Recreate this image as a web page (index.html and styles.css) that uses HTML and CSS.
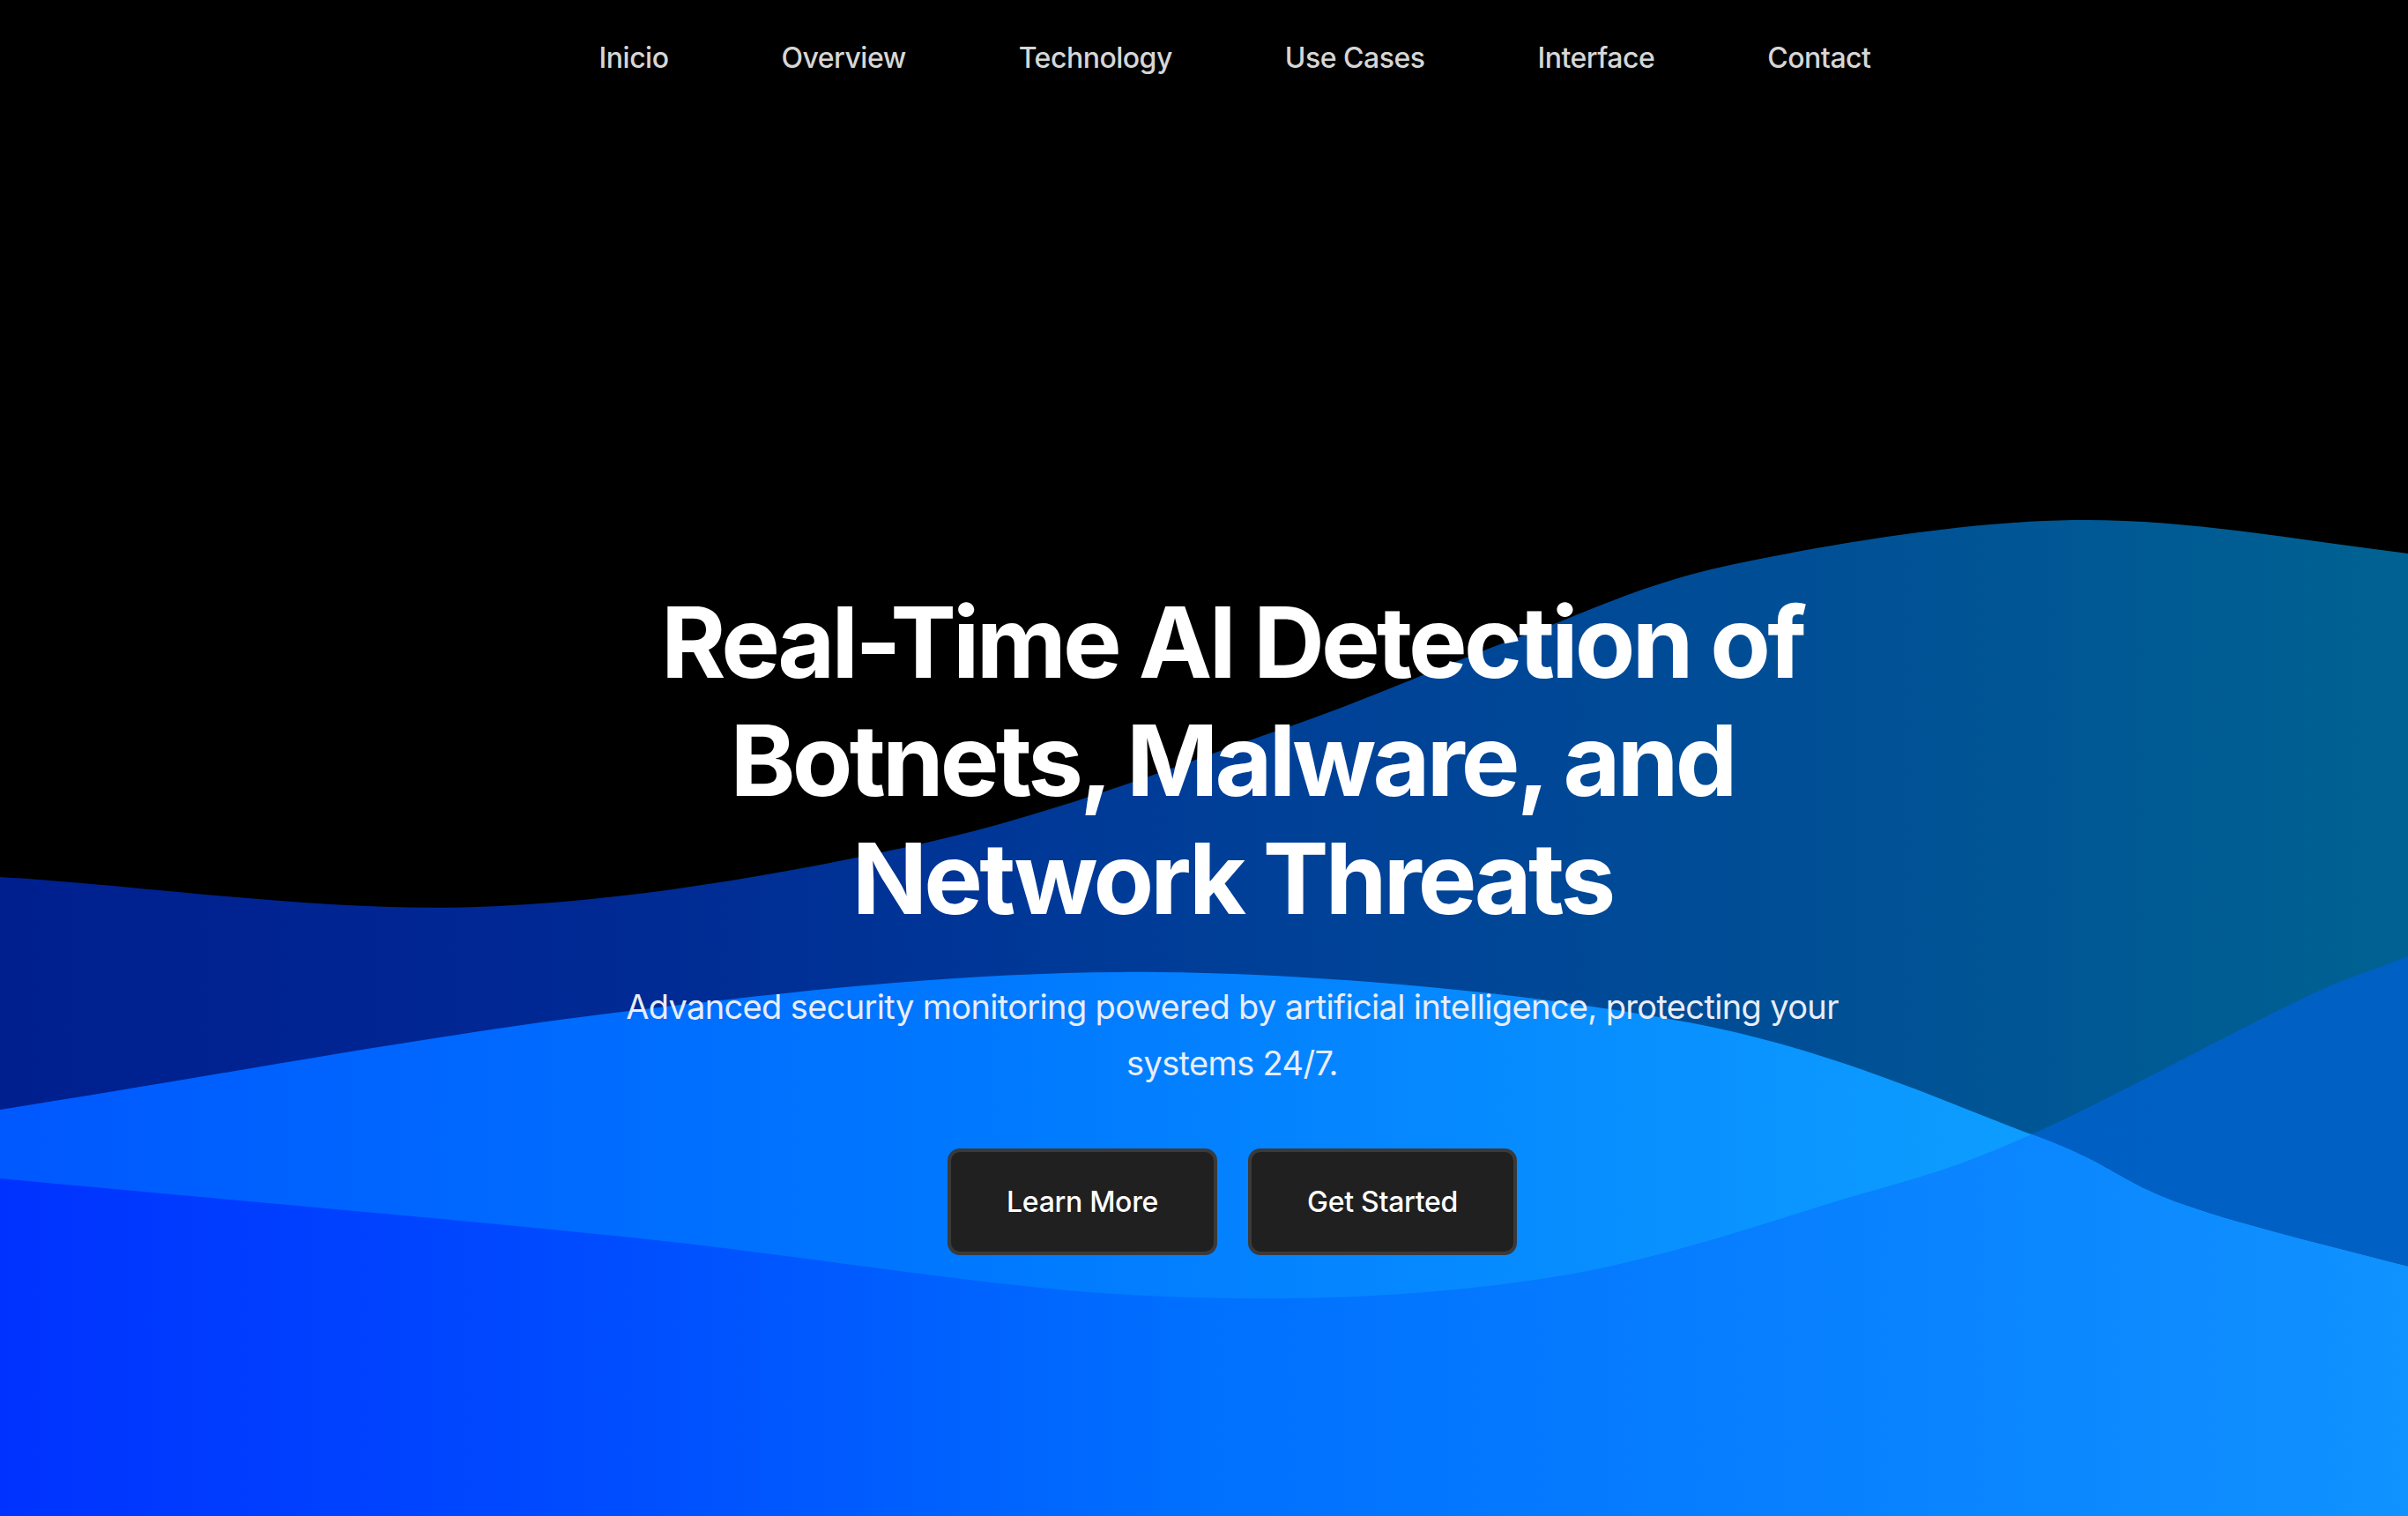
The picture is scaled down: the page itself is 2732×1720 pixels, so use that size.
FILE: index.html
```html
<!DOCTYPE html>
<html lang="en">
<head>
<meta charset="utf-8">
<title>AI Threat Detection</title>
<link rel="stylesheet" href="styles.css">
</head>
<body>
<div class="page">
  <svg class="waves" viewBox="0 0 2732 1720" preserveAspectRatio="none" aria-hidden="true">
    <defs>
      <linearGradient id="gBack" x1="0" y1="0" x2="1" y2="0">
        <stop offset="0" stop-color="#001f8f"/>
        <stop offset="0.25" stop-color="#002994"/>
        <stop offset="0.5" stop-color="#003e98"/>
        <stop offset="0.75" stop-color="#004f96"/>
        <stop offset="1" stop-color="#006292"/>
      </linearGradient>
      <linearGradient id="gFront" x1="0" y1="0" x2="1" y2="0">
        <stop offset="0" stop-color="#005ac0"/>
        <stop offset="1" stop-color="#0060c4"/>
      </linearGradient>
      <linearGradient id="gMid" x1="0" y1="0" x2="1" y2="0">
        <stop offset="0" stop-color="#0058ff"/>
        <stop offset="0.4" stop-color="#0078ff"/>
        <stop offset="0.8" stop-color="#0c9aff"/>
        <stop offset="1" stop-color="#10a4ff"/>
      </linearGradient>
      <linearGradient id="gBottom" x1="0" y1="0" x2="1" y2="0">
        <stop offset="0" stop-color="#0032ff"/>
        <stop offset="0.25" stop-color="#004cff"/>
        <stop offset="0.5" stop-color="#0070ff"/>
        <stop offset="0.75" stop-color="#0880ff"/>
        <stop offset="1" stop-color="#1092ff"/>
      </linearGradient>
      <clipPath id="clipMid">
        <path d="M0,1259 C236,1222 495,1173 714,1147 C933,1121 1115,1101 1315,1103 C1515,1105 1751,1129 1916,1160 C2081,1191 2212,1253 2305,1287 C2398,1321 2404,1341 2475,1366 C2546,1391 2646,1415 2732,1437 L2732,1720 L0,1720 Z"/>
      </clipPath>
    </defs>
    <rect x="0" y="0" width="2732" height="1720" fill="#000"/>
    <path fill="url(#gBack)" d="M0,995 C157,1004 366,1035 540,1029 C714,1023 894,991 1047,957 C1200,923 1342,866 1455,827 C1568,788 1638,754 1723,723 C1809,692 1863,662 1968,640 C2073,618 2225,592 2352,590 C2479,588 2607,613 2732,628 L2732,1720 L0,1720 Z"/>
    <path fill="url(#gFront)" d="M0,1337 C232,1359 480,1380 697,1402 C914,1424 1126,1462 1300,1470 C1474,1478 1609,1471 1742,1452 C1875,1433 2006,1386 2100,1358 C2194,1331 2221,1324 2305,1287 C2389,1250 2533,1171 2604,1137 C2675,1103 2683,1105 2732,1085 L2732,1720 L0,1720 Z"/>
    <path fill="url(#gMid)" d="M0,1259 C236,1222 495,1173 714,1147 C933,1121 1115,1101 1315,1103 C1515,1105 1751,1129 1916,1160 C2081,1191 2212,1253 2305,1287 C2398,1321 2404,1341 2475,1366 C2546,1391 2646,1415 2732,1437 L2732,1720 L0,1720 Z"/>
    <path fill="url(#gBottom)" clip-path="url(#clipMid)" d="M0,1337 C232,1359 480,1380 697,1402 C914,1424 1126,1462 1300,1470 C1474,1478 1609,1471 1742,1452 C1875,1433 2006,1386 2100,1358 C2194,1331 2221,1324 2305,1287 C2389,1250 2533,1171 2604,1137 C2675,1103 2683,1105 2732,1085 L2732,1720 L0,1720 Z"/>
  </svg>

  <nav class="nav">
    <ul class="nav-list">
      <li><a class="nav-link" href="#">Inicio</a></li>
      <li><a class="nav-link" href="#">Overview</a></li>
      <li><a class="nav-link" href="#">Technology</a></li>
      <li><a class="nav-link" href="#">Use Cases</a></li>
      <li><a class="nav-link" href="#">Interface</a></li>
      <li><a class="nav-link" href="#">Contact</a></li>
    </ul>
  </nav>

  <main class="hero">
    <h1 class="hero-title">Real-Time AI Detection of Botnets, Malware, and Network Threats</h1>
    <p class="hero-sub">Advanced security monitoring powered by artificial intelligence, protecting your systems 24/7.</p>
    <div class="hero-actions">
      <a class="btn" href="#">Learn More</a>
      <a class="btn" href="#">Get Started</a>
    </div>
  </main>
</div>
</body>
</html>
```

FILE: styles.css
```css
* {
  box-sizing: border-box;
}

html, body {
  margin: 0;
  padding: 0;
  background: #000;
}

body {
  font-family: Inter, "Noto Sans", "Liberation Sans", sans-serif;
  color: #fff;
}

.page {
  position: relative;
  width: 100%;
  min-height: 1720px;
  overflow: hidden;
}

.waves {
  position: absolute;
  inset: 0;
  width: 100%;
  height: 100%;
  display: block;
  z-index: 0;
}

.nav {
  position: relative;
  z-index: 1;
  padding: 46px 0 0 70px;
}

.nav-list {
  list-style: none;
  margin: 0;
  padding: 0;
  display: flex;
  justify-content: center;
  gap: 128px;
}

.nav-link {
  display: block;
  font-size: 32px;
  line-height: 40px;
  font-weight: 500;
  letter-spacing: -0.5px;
  color: #d6d6d6;
  text-decoration: none;
}

.hero {
  position: relative;
  z-index: 1;
  display: flex;
  flex-direction: column;
  align-items: center;
  padding: 575px 0 0 64px;
  text-align: center;
}

.hero-title {
  margin: 0;
  max-width: 1400px;
  font-size: 112px;
  line-height: 134px;
  font-weight: 700;
  letter-spacing: -3.8px;
  color: #fff;
}

.hero-sub {
  margin: 47px 0 0;
  max-width: 1440px;
  font-size: 38px;
  line-height: 64px;
  font-weight: 400;
  color: #e8edf8;
  letter-spacing: -0.65px;
}

.hero-actions {
  display: flex;
  gap: 35px;
  margin-top: 65px;
}

.btn {
  display: block;
  padding: 37.5px 63px;
  font-size: 32px;
  line-height: 38px;
  font-weight: 500;
  letter-spacing: -0.3px;
  color: #fff;
  text-decoration: none;
  background: #202020;
  border: 4px solid #3a3a3a;
  border-radius: 14px;
}
```
